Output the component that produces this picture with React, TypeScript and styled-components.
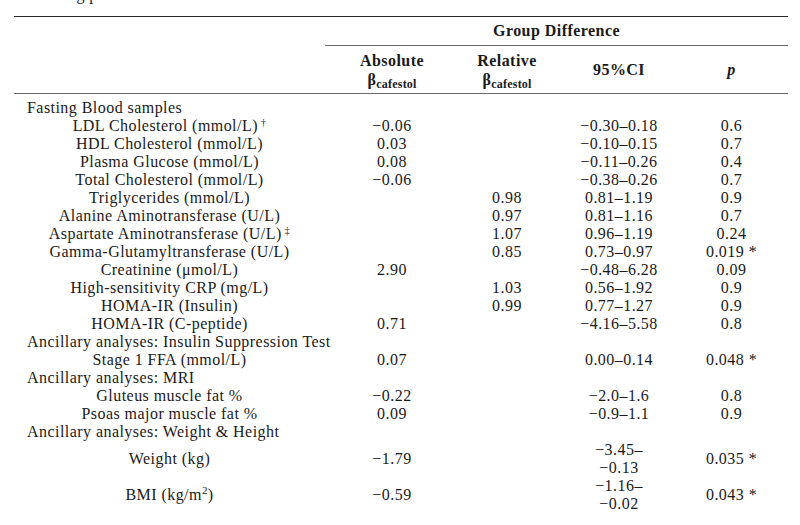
import React from "react";
import styled, { createGlobalStyle } from "styled-components";

const Global = createGlobalStyle`
  html, body { margin: 0; padding: 0; background: #fff; }
  body { font-family: "Liberation Serif", "DejaVu Serif", serif; color: #1a1a1a; }
`;

const Page = styled.div`
  width: 800px;
  height: 525px;
  overflow: hidden;
  background: #fff;
  letter-spacing: 0.45px;
`;

const Caption = styled.div`
  font-size: 16px;
  line-height: 18px;
  height: 5px;
  overflow: hidden;
  padding-left: 68px;
  & > span { display: block; margin-top: -14px; }
`;

const Table = styled.table`
  margin: 11px 0 0 14px;
  width: 774px;
  border-collapse: collapse;
  font-size: 16px;
  table-layout: fixed;
`;

const Col = styled.col<{ $w: number }>`
  width: ${(p) => p.$w}px;
`;

const TopRow = styled.tr`
  border-top: 1.5px solid #2a2a2a;
`;

const GroupCell = styled.th`
  font-weight: bold;
  height: 28px;
  text-align: center;
  vertical-align: middle;
  padding: 0;
  border-bottom: 1px solid #6a6a6a;
`;

const HeadRow = styled.tr`
  border-bottom: 1px solid #6a6a6a;
`;

const HeadCell = styled.th<{ $italic?: boolean; $last?: boolean }>`
  font-weight: bold;
  font-style: ${(p) => (p.$italic ? "italic" : "normal")};
  height: 47px;
  line-height: 19px;
  text-align: center;
  vertical-align: middle;
  padding: 0 ${(p) => (p.$last ? "8px" : "0")} 0 0;
`;

const Sub = styled.sub`
  font-size: 12px;
  vertical-align: -3px;
  line-height: 0;
  letter-spacing: 0.2px;
`;

const SpacerCell = styled.td`
  height: 5px;
  padding: 0;
`;

const Cell = styled.td<{ $left?: boolean; $tall?: boolean; $last?: boolean }>`
  padding: 0 ${(p) => (p.$last ? "8px" : "0")} 0 ${(p) => (p.$left ? "13px" : "0")};
  height: ${(p) => (p.$tall ? "36px" : "18px")};
  line-height: 18px;
  text-align: ${(p) => (p.$left ? "left" : "center")};
  vertical-align: middle;
  white-space: nowrap;
`;

const Wrap = styled.span`
  display: block;
  white-space: normal;
`;

const Mark = styled.sup`
  font-size: 10px;
  line-height: 0;
  vertical-align: 5px;
  margin-left: 3px;
`;

const Sup = styled.sup`
  font-size: 11px;
  line-height: 0;
`;

type Row =
  | { section: string }
  | {
      label: React.ReactNode;
      abs?: string;
      rel?: string;
      ci: React.ReactNode;
      p: string;
      tall?: boolean;
    };

const rows: Row[] = [
  { section: "Fasting Blood samples" },
  { label: <>LDL Cholesterol (mmol/L)<Mark>†</Mark></>, abs: "−0.06", ci: "−0.30–0.18", p: "0.6" },
  { label: "HDL Cholesterol (mmol/L)", abs: "0.03", ci: "−0.10–0.15", p: "0.7" },
  { label: "Plasma Glucose (mmol/L)", abs: "0.08", ci: "−0.11–0.26", p: "0.4" },
  { label: "Total Cholesterol (mmol/L)", abs: "−0.06", ci: "−0.38–0.26", p: "0.7" },
  { label: "Triglycerides (mmol/L)", rel: "0.98", ci: "0.81–1.19", p: "0.9" },
  { label: "Alanine Aminotransferase (U/L)", rel: "0.97", ci: "0.81–1.16", p: "0.7" },
  { label: <>Aspartate Aminotransferase (U/L)<Mark>‡</Mark></>, rel: "1.07", ci: "0.96–1.19", p: "0.24" },
  { label: "Gamma-Glutamyltransferase (U/L)", rel: "0.85", ci: "0.73–0.97", p: "0.019 *" },
  { label: "Creatinine (μmol/L)", abs: "2.90", ci: "−0.48–6.28", p: "0.09" },
  { label: "High-sensitivity CRP (mg/L)", rel: "1.03", ci: "0.56–1.92", p: "0.9" },
  { label: "HOMA-IR (Insulin)", rel: "0.99", ci: "0.77–1.27", p: "0.9" },
  { label: "HOMA-IR (C-peptide)", abs: "0.71", ci: "−4.16–5.58", p: "0.8" },
  { section: "Ancillary analyses: Insulin Suppression Test" },
  { label: "Stage 1 FFA (mmol/L)", abs: "0.07", ci: "0.00–0.14", p: "0.048 *" },
  { section: "Ancillary analyses: MRI" },
  { label: "Gluteus muscle fat %", abs: "−0.22", ci: "−2.0–1.6", p: "0.8" },
  { label: "Psoas major muscle fat %", abs: "0.09", ci: "−0.9–1.1", p: "0.9" },
  { section: "Ancillary analyses: Weight & Height" },
  { label: "Weight (kg)", abs: "−1.79", ci: <><Wrap>−3.45–</Wrap><Wrap>−0.13</Wrap></>, p: "0.035 *", tall: true },
  { label: <>BMI (kg/m<Sup>2</Sup>)</>, abs: "−0.59", ci: <><Wrap>−1.16–</Wrap><Wrap>−0.02</Wrap></>, p: "0.043 *", tall: true },
];

export default function App() {
  return (
    <Page>
      <Global />
      <Caption>
        <span>ng p</span>
      </Caption>
      <Table>
        <colgroup>
          <Col $w={311} />
          <Col $w={134} />
          <Col $w={96} />
          <Col $w={128} />
          <Col $w={105} />
        </colgroup>
        <thead>
          <TopRow>
            <th />
            <GroupCell colSpan={4}>Group Difference</GroupCell>
          </TopRow>
          <HeadRow>
            <HeadCell />
            <HeadCell>
              Absolute
              <br />β<Sub>cafestol</Sub>
            </HeadCell>
            <HeadCell>
              Relative
              <br />β<Sub>cafestol</Sub>
            </HeadCell>
            <HeadCell>95%CI</HeadCell>
            <HeadCell $italic $last>
              p
            </HeadCell>
          </HeadRow>
        </thead>
        <tbody>
          <tr>
            <SpacerCell colSpan={5} />
          </tr>
          {rows.map((r, i) =>
            "section" in r ? (
              <tr key={i}>
                <Cell $left colSpan={5}>
                  {r.section}
                </Cell>
              </tr>
            ) : (
              <tr key={i}>
                <Cell $tall={r.tall}>{r.label}</Cell>
                <Cell $tall={r.tall}>{r.abs ?? ""}</Cell>
                <Cell $tall={r.tall}>{r.rel ?? ""}</Cell>
                <Cell $tall={r.tall}>{r.ci}</Cell>
                <Cell $tall={r.tall} $last>
                  {r.p}
                </Cell>
              </tr>
            )
          )}
        </tbody>
      </Table>
    </Page>
  );
}
